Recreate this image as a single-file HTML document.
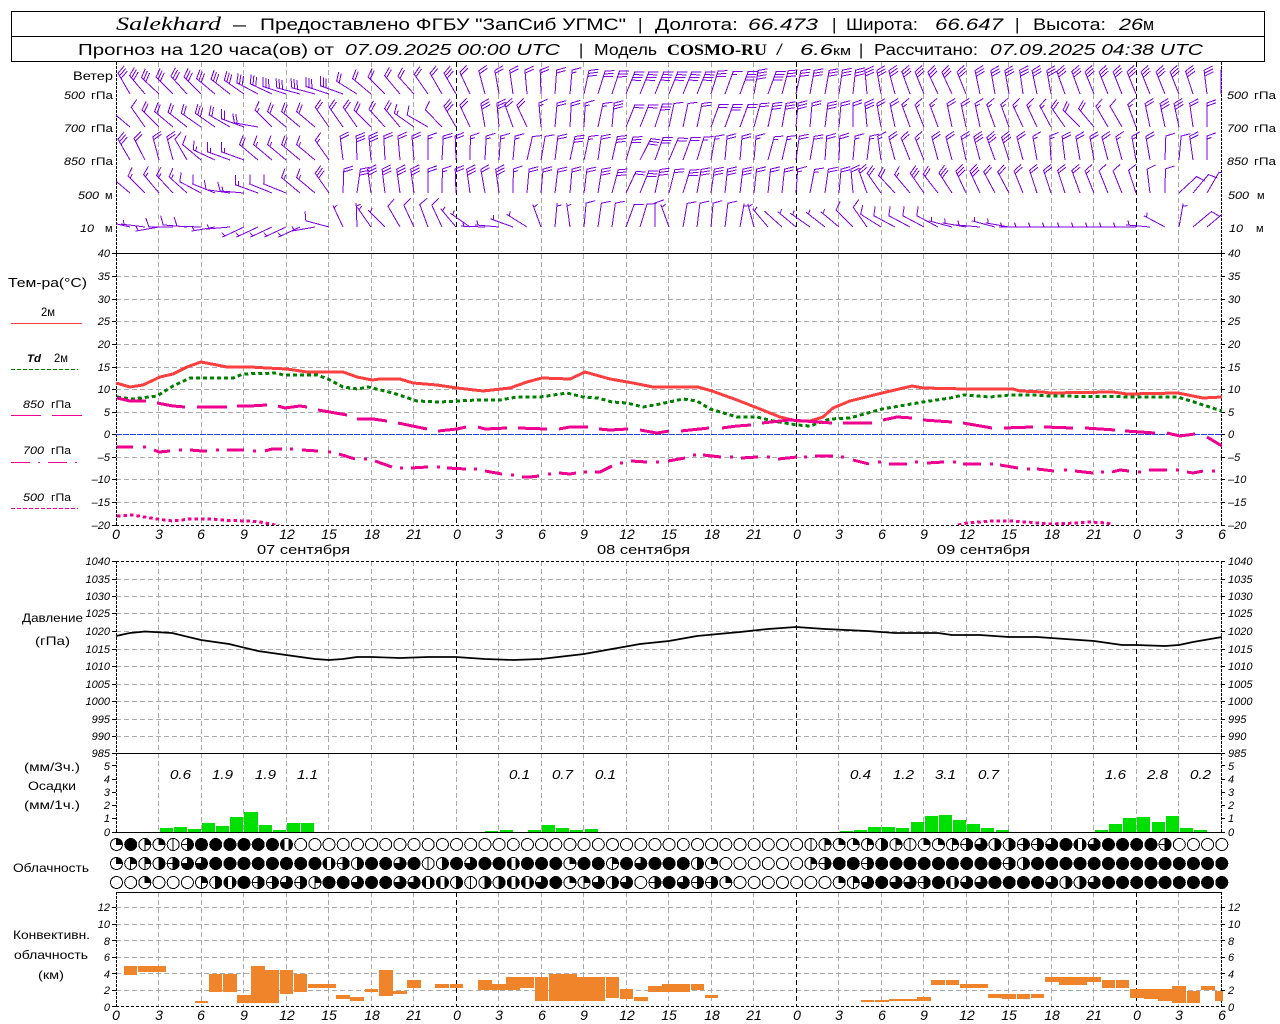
<!DOCTYPE html>
<html lang="ru"><head><meta charset="utf-8"><title>Salekhard</title>
<style>
html,body{margin:0;padding:0;background:#fff}
svg{display:block}
text{font-family:"Liberation Sans",sans-serif;fill:#000}
.i{font-style:italic}
.t{font-size:17px}
.u{font-size:16px}
.l{font-size:12px}
.a{font-size:11px;font-style:italic}
.an{font-size:11px;font-style:italic;text-anchor:end}
.x{font-size:14px;font-style:italic;text-anchor:middle}
.p{font-size:13px;font-style:italic}
.m{text-anchor:middle}
.cr{shape-rendering:crispEdges}
</style></head><body>
<svg width="1280" height="1024" viewBox="0 0 1280 1024" xmlns="http://www.w3.org/2000/svg">
<defs>
<clipPath id="wc"><rect x="116" y="62" width="1106" height="191"/></clipPath>
<clipPath id="tc"><rect x="116" y="253" width="1106" height="272"/></clipPath>
<clipPath id="cc"><rect x="116" y="892" width="1108" height="114"/></clipPath>
<path id="z" d="M0 0V-24"/>
<path id="h" d="M0 0V-24M0-21l4.500-1.500"/>
<path id="a" d="M0 0V-24l9-3.200"/>
<path id="b" d="M0 0V-24l9-3.200M0-21l4.500-1.500"/>
<path id="c" d="M0 0V-24l9-3.200M0-21l9-3.200"/>
<path id="e" d="M0 0V-24l9-3.200M0-21l9-3.200M0-18l9-3.200"/>
<path id="f" d="M0 0V-24l9-3.200M0-21l9-3.200M0-18l9-3.200M0-15l9-3.200"/>
<g id="k0"><circle r="6" fill="#fff" stroke="#000"/></g>
<g id="k1"><circle r="6" fill="#fff" stroke="#000"/><path d="M0-6V6" stroke="#000"/></g>
<g id="k2"><circle r="6" fill="#fff" stroke="#000"/><path d="M0 0V-6A6 6 0 0 1 6 0Z" fill="#000" stroke="#000"/></g>
<g id="k3"><circle r="6" fill="#fff" stroke="#000"/><path d="M0 6V-6A6 6 0 0 1 6 0H0Z" fill="#000" stroke="#000"/></g>
<g id="k4"><circle r="6" fill="#fff" stroke="#000"/><path d="M0-6A6 6 0 0 1 0 6Z" fill="#000" stroke="#000"/></g>
<g id="k5"><circle r="6" fill="#fff" stroke="#000"/><path d="M0-6A6 6 0 0 1 0 6ZM-6 0H0" fill="#000" stroke="#000"/></g>
<g id="k6"><circle r="6" fill="#000" stroke="#000"/><path d="M0 0H-6.500V-6.500H0Z" fill="#fff"/><path d="M-6 0A6 6 0 0 1 0-6" fill="none" stroke="#000"/><path d="M-6 0H0V-6" fill="none" stroke="#000"/></g>
<g id="k7"><circle r="6" fill="#000" stroke="#000"/><rect x="-2" y="-5.500" width="4" height="11" fill="#fff"/></g>
<g id="k8"><circle r="6.500" fill="#000"/></g>
</defs>

<!-- header -->
<rect x="11.500" y="11.500" width="1253" height="25" fill="none" stroke="#000" class="cr"/>
<rect x="11.500" y="36.500" width="1253" height="25" fill="none" stroke="#000" class="cr"/>
<text x="116" y="30" class="t i" style="font-family:'Liberation Serif',serif;font-size:19px" textLength="105" lengthAdjust="spacingAndGlyphs">Salekhard</text>
<text x="233" y="30" class="t" textLength="13" lengthAdjust="spacingAndGlyphs">–</text>
<text x="260" y="30" class="t" textLength="366" lengthAdjust="spacingAndGlyphs">Предоставлено ФГБУ "ЗапСиб УГМС"</text>
<text x="638" y="30" class="t">|</text>
<text x="655" y="30" class="t" textLength="83" lengthAdjust="spacingAndGlyphs">Долгота:</text>
<text x="748" y="30" class="t i" textLength="70" lengthAdjust="spacingAndGlyphs">66.473</text>
<text x="832" y="30" class="t">|</text>
<text x="846" y="30" class="t" textLength="72" lengthAdjust="spacingAndGlyphs">Широта:</text>
<text x="935" y="30" class="t i" textLength="68" lengthAdjust="spacingAndGlyphs">66.647</text>
<text x="1015" y="30" class="t">|</text>
<text x="1033" y="30" class="t" textLength="73" lengthAdjust="spacingAndGlyphs">Высота:</text>
<text x="1119" y="30" class="t i" textLength="24" lengthAdjust="spacingAndGlyphs">26</text>
<text x="1143" y="30" class="t" textLength="11" lengthAdjust="spacingAndGlyphs">м</text>
<text x="78" y="55" class="u" textLength="256" lengthAdjust="spacingAndGlyphs">Прогноз на 120 часа(ов) от</text>
<text x="345" y="55" class="u i" textLength="215" lengthAdjust="spacingAndGlyphs">07.09.2025 00:00 UTC</text>
<text x="579" y="55" class="u">|</text>
<text x="594" y="55" class="u" textLength="63" lengthAdjust="spacingAndGlyphs">Модель</text>
<text x="667" y="55" style="font-family:'Liberation Serif',serif;font-size:16px;font-weight:bold" textLength="100" lengthAdjust="spacingAndGlyphs">COSMO-RU</text>
<text x="777" y="55" class="u i">/</text>
<text x="800" y="55" class="u i" textLength="33" lengthAdjust="spacingAndGlyphs">6.6</text>
<text x="833" y="55" style="font-size:13px" textLength="18" lengthAdjust="spacingAndGlyphs">км</text>
<text x="859" y="55" class="u">|</text>
<text x="874" y="55" class="u" textLength="104" lengthAdjust="spacingAndGlyphs">Рассчитано:</text>
<text x="990" y="55" class="u i" textLength="213" lengthAdjust="spacingAndGlyphs">07.09.2025 04:38 UTC</text>

<!-- grid verticals -->
<g class="cr" fill="none">
<path stroke="#aaa" stroke-dasharray="5 3" d="M158.500 62V525M201.500 62V525M243.500 62V525M286.500 62V525M328.500 62V525M371.500 62V525M413.500 62V525M498.500 62V525M541.500 62V525M583.500 62V525M626.500 62V525M668.500 62V525M711.500 62V525M753.500 62V525M838.500 62V525M881.500 62V525M923.500 62V525M966.500 62V525M1008.500 62V525M1051.500 62V525M1093.500 62V525M1178.500 62V525"/>
<path stroke="#aaa" stroke-dasharray="5 3" d="M158.500 561V832M201.500 561V832M243.500 561V832M286.500 561V832M328.500 561V832M371.500 561V832M413.500 561V832M498.500 561V832M541.500 561V832M583.500 561V832M626.500 561V832M668.500 561V832M711.500 561V832M753.500 561V832M838.500 561V832M881.500 561V832M923.500 561V832M966.500 561V832M1008.500 561V832M1051.500 561V832M1093.500 561V832M1178.500 561V832M456.500 753V832M796.500 753V832M1136.500 753V832"/>
<path stroke="#aaa" stroke-dasharray="5 3" d="M158.500 892V1006M201.500 892V1006M243.500 892V1006M286.500 892V1006M328.500 892V1006M371.500 892V1006M413.500 892V1006M498.500 892V1006M541.500 892V1006M583.500 892V1006M626.500 892V1006M668.500 892V1006M711.500 892V1006M753.500 892V1006M838.500 892V1006M881.500 892V1006M923.500 892V1006M966.500 892V1006M1008.500 892V1006M1051.500 892V1006M1093.500 892V1006M1178.500 892V1006"/>
<path stroke="#aaa" stroke-dasharray="5 3" d="M116 276.500H1221M116 299.500H1221M116 321.500H1221M116 344.500H1221M116 367.500H1221M116 389.500H1221M116 412.500H1221M116 457.500H1221M116 479.500H1221M116 502.500H1221M116 579.500H1221M116 596.500H1221M116 613.500H1221M116 631.500H1221M116 649.500H1221M116 666.500H1221M116 684.500H1221M116 701.500H1221M116 719.500H1221M116 736.500H1221M116 907.500H1221M116 924.500H1221M116 940.500H1221M116 957.500H1221M116 973.500H1221M116 990.500H1221"/>
<path stroke="#000" stroke-dasharray="5 3" d="M456.500 62V525M796.500 62V525M1136.500 62V525M456.500 561V753M796.500 561V753M1136.500 561V753M456.500 892V1006M796.500 892V1006M1136.500 892V1006"/>
<path stroke="#000" stroke-dasharray="3 1" d="M116.500 62V525M1221.500 62V525M116.500 561V832M1221.500 561V832M116.500 892V1006M1221.500 892V1006"/>
<path stroke="#000" stroke-dasharray="3 2" d="M116 525.500H1221M116 561.500H1221M116 1006.500H1221"/>
<path stroke="#2040f0" stroke-dasharray="6 1" d="M116 434.500H1221"/>
<path stroke="#000" d="M112 253.500H1225M112 753.500H1225M116 832.500H1221M116 892.500H1221"/>
<path stroke="#000" d="M112 276.500h4M112 299.500h4M112 321.500h4M112 344.500h4M112 367.500h4M112 389.500h4M112 412.500h4M112 434.500h4M112 457.500h4M112 479.500h4M112 502.500h4M112 525.500h4M112 561.500h4M112 579.500h4M112 596.500h4M112 613.500h4M112 631.500h4M112 649.500h4M112 666.500h4M112 684.500h4M112 701.500h4M112 719.500h4M112 736.500h4M112 765.500h4M112 779.500h4M112 792.500h4M112 805.500h4M112 818.500h4M112 832.500h4M112 907.500h4M112 924.500h4M112 940.500h4M112 957.500h4M112 973.500h4M112 990.500h4M112 1006.500h4M1221 276.500h4M1221 299.500h4M1221 321.500h4M1221 344.500h4M1221 367.500h4M1221 389.500h4M1221 412.500h4M1221 434.500h4M1221 457.500h4M1221 479.500h4M1221 502.500h4M1221 525.500h4M1221 561.500h4M1221 579.500h4M1221 596.500h4M1221 613.500h4M1221 631.500h4M1221 649.500h4M1221 666.500h4M1221 684.500h4M1221 701.500h4M1221 719.500h4M1221 736.500h4M1221 765.500h4M1221 779.500h4M1221 792.500h4M1221 805.500h4M1221 818.500h4M1221 832.500h4M1221 907.500h4M1221 924.500h4M1221 940.500h4M1221 957.500h4M1221 973.500h4M1221 990.500h4M1221 1006.500h4"/>
</g>

<!-- wind barbs -->
<g clip-path="url(#wc)" fill="none" stroke="#7f00e6" class="cr">
<g transform="translate(0,94)">
<use href="#e" transform="translate(130)rotate(-30)"/><use href="#e" transform="translate(145)rotate(-40)"/><use href="#e" transform="translate(159)rotate(-47)"/><use href="#e" transform="translate(173)rotate(-45)"/><use href="#e" transform="translate(187)rotate(-42)"/><use href="#e" transform="translate(201)rotate(-45)"/><use href="#e" transform="translate(215)rotate(-50)"/><use href="#e" transform="translate(230)rotate(-52)"/><use href="#e" transform="translate(244)rotate(-55)"/><use href="#e" transform="translate(258)rotate(-62)"/><use href="#e" transform="translate(272)rotate(-65)"/><use href="#e" transform="translate(286)rotate(-72)"/><use href="#e" transform="translate(300)rotate(-75)"/><use href="#e" transform="translate(315)rotate(-75)"/><use href="#e" transform="translate(329)rotate(-72)"/><use href="#e" transform="translate(343)rotate(-70)"/><use href="#c" transform="translate(357)rotate(-58)"/><use href="#c" transform="translate(371)rotate(-50)"/><use href="#c" transform="translate(385)rotate(-45)"/><use href="#c" transform="translate(400)rotate(-40)"/><use href="#c" transform="translate(414)rotate(-42)"/><use href="#c" transform="translate(428)rotate(-35)"/><use href="#c" transform="translate(442)rotate(-30)"/><use href="#e" transform="translate(456)rotate(-30)"/><use href="#c" transform="translate(470)rotate(-25)"/><use href="#c" transform="translate(485)rotate(-15)"/><use href="#c" transform="translate(499)rotate(-10)"/><use href="#c" transform="translate(513)rotate(-8)"/><use href="#c" transform="translate(527)rotate(-5)"/><use href="#c" transform="translate(541)rotate(-2)"/><use href="#c" transform="translate(555)rotate(4)"/><use href="#b" transform="translate(570)rotate(5)"/><use href="#e" transform="translate(584)rotate(12)"/><use href="#e" transform="translate(598)rotate(17)"/><use href="#e" transform="translate(612)rotate(18)"/><use href="#f" transform="translate(626)rotate(22)"/><use href="#f" transform="translate(640)rotate(22)"/><use href="#f" transform="translate(655)rotate(22)"/><use href="#f" transform="translate(669)rotate(22)"/><use href="#f" transform="translate(683)rotate(22)"/><use href="#f" transform="translate(697)rotate(22)"/><use href="#e" transform="translate(711)rotate(17)"/><use href="#b" transform="translate(725)rotate(20)"/><use href="#f" transform="translate(740)rotate(20)"/><use href="#f" transform="translate(754)rotate(10)"/><use href="#f" transform="translate(768)rotate(20)"/><use href="#e" transform="translate(782)rotate(15)"/><use href="#e" transform="translate(796)rotate(12)"/><use href="#e" transform="translate(810)rotate(10)"/><use href="#e" transform="translate(825)rotate(10)"/><use href="#e" transform="translate(839)rotate(8)"/><use href="#e" transform="translate(853)rotate(6)"/><use href="#e" transform="translate(867)rotate(-5)"/><use href="#e" transform="translate(881)rotate(-10)"/><use href="#e" transform="translate(895)rotate(-15)"/><use href="#e" transform="translate(910)rotate(-20)"/><use href="#e" transform="translate(924)rotate(-22)"/><use href="#e" transform="translate(938)rotate(-25)"/><use href="#e" transform="translate(952)rotate(-25)"/><use href="#e" transform="translate(966)rotate(-22)"/><use href="#e" transform="translate(980)rotate(-12)"/><use href="#e" transform="translate(995)rotate(-10)"/><use href="#e" transform="translate(1009)rotate(-10)"/><use href="#e" transform="translate(1023)rotate(-8)"/><use href="#e" transform="translate(1037)rotate(-12)"/><use href="#e" transform="translate(1051)rotate(-10)"/><use href="#e" transform="translate(1065)rotate(-20)"/><use href="#e" transform="translate(1080)rotate(-20)"/><use href="#e" transform="translate(1094)rotate(-22)"/><use href="#e" transform="translate(1108)rotate(-22)"/><use href="#e" transform="translate(1122)rotate(-22)"/><use href="#e" transform="translate(1136)rotate(-22)"/><use href="#e" transform="translate(1150)rotate(-22)"/><use href="#e" transform="translate(1165)rotate(-22)"/><use href="#e" transform="translate(1179)rotate(-22)"/><use href="#e" transform="translate(1193)rotate(-18)"/><use href="#e" transform="translate(1207)rotate(-7)"/><use href="#e" transform="translate(1221)rotate(0)"/>
</g>
<g transform="translate(0,127)">
<use href="#a" transform="translate(130)rotate(-50)"/><use href="#a" transform="translate(145)rotate(-35)"/><use href="#c" transform="translate(159)rotate(-45)"/><use href="#c" transform="translate(173)rotate(-50)"/><use href="#c" transform="translate(187)rotate(-52)"/><use href="#c" transform="translate(201)rotate(-55)"/><use href="#e" transform="translate(215)rotate(-55)"/><use href="#c" transform="translate(230)rotate(-60)"/><use href="#c" transform="translate(244)rotate(-70)"/><use href="#c" transform="translate(258)rotate(-80)"/><use href="#b" transform="translate(272)rotate(-45)"/><use href="#c" transform="translate(286)rotate(-50)"/><use href="#c" transform="translate(300)rotate(-50)"/><use href="#c" transform="translate(315)rotate(-50)"/><use href="#c" transform="translate(329)rotate(-35)"/><use href="#c" transform="translate(343)rotate(-35)"/><use href="#c" transform="translate(357)rotate(-35)"/><use href="#c" transform="translate(371)rotate(-45)"/><use href="#c" transform="translate(385)rotate(-42)"/><use href="#c" transform="translate(400)rotate(-40)"/><use href="#b" transform="translate(414)rotate(-55)"/><use href="#a" transform="translate(428)rotate(-60)"/><use href="#a" transform="translate(442)rotate(-44)"/><use href="#e" transform="translate(456)rotate(-30)"/><use href="#c" transform="translate(470)rotate(-25)"/><use href="#e" transform="translate(485)rotate(-10)"/><use href="#e" transform="translate(499)rotate(-5)"/><use href="#c" transform="translate(513)rotate(-20)"/><use href="#c" transform="translate(527)rotate(-25)"/><use href="#b" transform="translate(541)rotate(-5)"/><use href="#c" transform="translate(555)rotate(5)"/><use href="#c" transform="translate(570)rotate(3)"/><use href="#b" transform="translate(584)rotate(3)"/><use href="#b" transform="translate(598)rotate(12)"/><use href="#e" transform="translate(612)rotate(5)"/><use href="#c" transform="translate(626)rotate(22)"/><use href="#c" transform="translate(640)rotate(22)"/><use href="#e" transform="translate(655)rotate(18)"/><use href="#a" transform="translate(669)rotate(12)"/><use href="#a" transform="translate(683)rotate(12)"/><use href="#c" transform="translate(697)rotate(12)"/><use href="#c" transform="translate(711)rotate(20)"/><use href="#e" transform="translate(725)rotate(20)"/><use href="#c" transform="translate(740)rotate(20)"/><use href="#c" transform="translate(754)rotate(15)"/><use href="#e" transform="translate(768)rotate(12)"/><use href="#e" transform="translate(782)rotate(10)"/><use href="#e" transform="translate(796)rotate(5)"/><use href="#c" transform="translate(810)rotate(5)"/><use href="#e" transform="translate(825)rotate(7)"/><use href="#c" transform="translate(839)rotate(5)"/><use href="#c" transform="translate(853)rotate(0)"/><use href="#e" transform="translate(867)rotate(-5)"/><use href="#c" transform="translate(881)rotate(-10)"/><use href="#c" transform="translate(895)rotate(-12)"/><use href="#b" transform="translate(910)rotate(-20)"/><use href="#b" transform="translate(924)rotate(-22)"/><use href="#b" transform="translate(938)rotate(-20)"/><use href="#c" transform="translate(952)rotate(-12)"/><use href="#c" transform="translate(966)rotate(-12)"/><use href="#b" transform="translate(980)rotate(-12)"/><use href="#b" transform="translate(995)rotate(-20)"/><use href="#b" transform="translate(1009)rotate(-20)"/><use href="#b" transform="translate(1023)rotate(-25)"/><use href="#b" transform="translate(1037)rotate(-25)"/><use href="#b" transform="translate(1051)rotate(-28)"/><use href="#c" transform="translate(1065)rotate(-35)"/><use href="#c" transform="translate(1080)rotate(-45)"/><use href="#c" transform="translate(1094)rotate(-40)"/><use href="#b" transform="translate(1108)rotate(-30)"/><use href="#a" transform="translate(1122)rotate(-30)"/><use href="#b" transform="translate(1136)rotate(-20)"/><use href="#c" transform="translate(1150)rotate(-12)"/><use href="#e" transform="translate(1165)rotate(-12)"/><use href="#e" transform="translate(1179)rotate(-12)"/><use href="#c" transform="translate(1193)rotate(-8)"/><use href="#c" transform="translate(1207)rotate(0)"/>
</g>
<g transform="translate(0,160)">
<use href="#e" transform="translate(130)rotate(-30)"/><use href="#c" transform="translate(145)rotate(-27)"/><use href="#c" transform="translate(159)rotate(-15)"/><use href="#c" transform="translate(173)rotate(-15)"/><use href="#a" transform="translate(187)rotate(-30)"/><use href="#a" transform="translate(201)rotate(-50)"/><use href="#b" transform="translate(215)rotate(-65)"/><use href="#b" transform="translate(230)rotate(-70)"/><use href="#b" transform="translate(244)rotate(-70)"/><use href="#c" transform="translate(258)rotate(-50)"/><use href="#b" transform="translate(272)rotate(-50)"/><use href="#b" transform="translate(286)rotate(-50)"/><use href="#c" transform="translate(300)rotate(-50)"/><use href="#b" transform="translate(315)rotate(-50)"/><use href="#b" transform="translate(329)rotate(-35)"/><use href="#c" transform="translate(343)rotate(-7)"/><use href="#e" transform="translate(357)rotate(-2)"/><use href="#e" transform="translate(371)rotate(-5)"/><use href="#c" transform="translate(385)rotate(-3)"/><use href="#c" transform="translate(400)rotate(-5)"/><use href="#c" transform="translate(414)rotate(-5)"/><use href="#b" transform="translate(428)rotate(0)"/><use href="#c" transform="translate(442)rotate(3)"/><use href="#c" transform="translate(456)rotate(-2)"/><use href="#b" transform="translate(470)rotate(1)"/><use href="#b" transform="translate(485)rotate(3)"/><use href="#b" transform="translate(499)rotate(4)"/><use href="#b" transform="translate(513)rotate(5)"/><use href="#a" transform="translate(527)rotate(13)"/><use href="#a" transform="translate(541)rotate(10)"/><use href="#c" transform="translate(555)rotate(7)"/><use href="#e" transform="translate(570)rotate(12)"/><use href="#b" transform="translate(584)rotate(12)"/><use href="#c" transform="translate(598)rotate(8)"/><use href="#e" transform="translate(612)rotate(13)"/><use href="#e" transform="translate(626)rotate(17)"/><use href="#e" transform="translate(640)rotate(27)"/><use href="#e" transform="translate(655)rotate(20)"/><use href="#c" transform="translate(669)rotate(23)"/><use href="#c" transform="translate(683)rotate(20)"/><use href="#b" transform="translate(697)rotate(17)"/><use href="#b" transform="translate(711)rotate(10)"/><use href="#c" transform="translate(725)rotate(5)"/><use href="#c" transform="translate(740)rotate(5)"/><use href="#b" transform="translate(754)rotate(5)"/><use href="#b" transform="translate(768)rotate(15)"/><use href="#b" transform="translate(782)rotate(13)"/><use href="#c" transform="translate(796)rotate(8)"/><use href="#c" transform="translate(810)rotate(10)"/><use href="#c" transform="translate(825)rotate(4)"/><use href="#c" transform="translate(839)rotate(2)"/><use href="#b" transform="translate(853)rotate(5)"/><use href="#b" transform="translate(867)rotate(7)"/><use href="#b" transform="translate(881)rotate(-8)"/><use href="#c" transform="translate(895)rotate(-15)"/><use href="#c" transform="translate(910)rotate(-22)"/><use href="#b" transform="translate(924)rotate(-22)"/><use href="#c" transform="translate(938)rotate(-15)"/><use href="#c" transform="translate(952)rotate(-15)"/><use href="#c" transform="translate(966)rotate(-12)"/><use href="#e" transform="translate(980)rotate(-15)"/><use href="#e" transform="translate(995)rotate(-20)"/><use href="#e" transform="translate(1009)rotate(-18)"/><use href="#c" transform="translate(1023)rotate(-15)"/><use href="#b" transform="translate(1037)rotate(-10)"/><use href="#b" transform="translate(1051)rotate(-3)"/><use href="#c" transform="translate(1065)rotate(-7)"/><use href="#c" transform="translate(1080)rotate(-10)"/><use href="#c" transform="translate(1094)rotate(-10)"/><use href="#c" transform="translate(1108)rotate(-15)"/><use href="#b" transform="translate(1122)rotate(-15)"/><use href="#b" transform="translate(1136)rotate(-10)"/><use href="#c" transform="translate(1150)rotate(-10)"/><use href="#a" transform="translate(1165)rotate(2)"/><use href="#a" transform="translate(1179)rotate(5)"/><use href="#c" transform="translate(1193)rotate(-8)"/><use href="#b" transform="translate(1207)rotate(0)"/>
</g>
<g transform="translate(0,193)">
<use href="#a" transform="translate(130)rotate(-50)"/><use href="#b" transform="translate(145)rotate(-45)"/><use href="#b" transform="translate(159)rotate(-40)"/><use href="#b" transform="translate(173)rotate(-43)"/><use href="#b" transform="translate(187)rotate(-48)"/><use href="#a" transform="translate(201)rotate(-62)"/><use href="#a" transform="translate(215)rotate(-68)"/><use href="#a" transform="translate(230)rotate(-82)"/><use href="#b" transform="translate(244)rotate(-85)"/><use href="#b" transform="translate(258)rotate(-70)"/><use href="#a" transform="translate(272)rotate(-68)"/><use href="#a" transform="translate(286)rotate(-68)"/><use href="#b" transform="translate(300)rotate(-50)"/><use href="#b" transform="translate(315)rotate(-50)"/><use href="#e" transform="translate(329)rotate(-35)"/><use href="#c" transform="translate(343)rotate(2)"/><use href="#e" transform="translate(357)rotate(8)"/><use href="#e" transform="translate(371)rotate(-8)"/><use href="#e" transform="translate(385)rotate(-7)"/><use href="#e" transform="translate(400)rotate(-8)"/><use href="#e" transform="translate(414)rotate(-8)"/><use href="#c" transform="translate(428)rotate(0)"/><use href="#b" transform="translate(442)rotate(1)"/><use href="#c" transform="translate(456)rotate(-2)"/><use href="#e" transform="translate(470)rotate(-8)"/><use href="#c" transform="translate(485)rotate(-10)"/><use href="#e" transform="translate(499)rotate(-8)"/><use href="#b" transform="translate(513)rotate(1)"/><use href="#c" transform="translate(527)rotate(5)"/><use href="#c" transform="translate(541)rotate(5)"/><use href="#c" transform="translate(555)rotate(7)"/><use href="#c" transform="translate(570)rotate(5)"/><use href="#c" transform="translate(584)rotate(7)"/><use href="#e" transform="translate(598)rotate(9)"/><use href="#e" transform="translate(612)rotate(15)"/><use href="#c" transform="translate(626)rotate(25)"/><use href="#e" transform="translate(640)rotate(22)"/><use href="#e" transform="translate(655)rotate(12)"/><use href="#c" transform="translate(669)rotate(14)"/><use href="#e" transform="translate(683)rotate(17)"/><use href="#e" transform="translate(697)rotate(10)"/><use href="#e" transform="translate(711)rotate(8)"/><use href="#e" transform="translate(725)rotate(6)"/><use href="#e" transform="translate(740)rotate(7)"/><use href="#c" transform="translate(754)rotate(6)"/><use href="#c" transform="translate(768)rotate(6)"/><use href="#c" transform="translate(782)rotate(6)"/><use href="#b" transform="translate(796)rotate(4)"/><use href="#b" transform="translate(810)rotate(11)"/><use href="#c" transform="translate(825)rotate(8)"/><use href="#c" transform="translate(839)rotate(5)"/><use href="#c" transform="translate(853)rotate(-5)"/><use href="#c" transform="translate(867)rotate(-20)"/><use href="#c" transform="translate(881)rotate(-35)"/><use href="#c" transform="translate(895)rotate(-43)"/><use href="#b" transform="translate(910)rotate(-40)"/><use href="#e" transform="translate(924)rotate(-35)"/><use href="#c" transform="translate(938)rotate(-38)"/><use href="#e" transform="translate(952)rotate(-33)"/><use href="#e" transform="translate(966)rotate(-25)"/><use href="#e" transform="translate(980)rotate(-25)"/><use href="#c" transform="translate(995)rotate(-28)"/><use href="#c" transform="translate(1009)rotate(-28)"/><use href="#c" transform="translate(1023)rotate(-22)"/><use href="#c" transform="translate(1037)rotate(-18)"/><use href="#c" transform="translate(1051)rotate(-18)"/><use href="#c" transform="translate(1065)rotate(-18)"/><use href="#c" transform="translate(1080)rotate(-20)"/><use href="#b" transform="translate(1094)rotate(-22)"/><use href="#a" transform="translate(1108)rotate(-22)"/><use href="#a" transform="translate(1122)rotate(-22)"/><use href="#a" transform="translate(1136)rotate(-18)"/><use href="#a" transform="translate(1150)rotate(-7)"/><use href="#a" transform="translate(1165)rotate(1)"/><use href="#a" transform="translate(1179)rotate(47)"/><use href="#a" transform="translate(1193)rotate(40)"/><use href="#a" transform="translate(1207)rotate(30)"/>
</g>
<g transform="translate(0,227)">
<use href="#h" transform="translate(130)rotate(-77)"/><use href="#h" transform="translate(145)rotate(-83)"/><use href="#h" transform="translate(159)rotate(-100)"/><use href="#a" transform="translate(173)rotate(-90)"/><use href="#a" transform="translate(187)rotate(-85)"/><use href="#a" transform="translate(201)rotate(-88)"/><use href="#h" transform="translate(215)rotate(-100)"/><use href="#h" transform="translate(230)rotate(-95)"/><use href="#h" transform="translate(244)rotate(-115)"/><use href="#h" transform="translate(258)rotate(-115)"/><use href="#h" transform="translate(272)rotate(-115)"/><use href="#h" transform="translate(286)rotate(-115)"/><use href="#h" transform="translate(300)rotate(-115)"/><use href="#h" transform="translate(315)rotate(-100)"/><use href="#a" transform="translate(329)rotate(-75)"/><use href="#h" transform="translate(343)rotate(-25)"/><use href="#h" transform="translate(357)rotate(-2)"/><use href="#h" transform="translate(371)rotate(-35)"/><use href="#h" transform="translate(385)rotate(-45)"/><use href="#a" transform="translate(400)rotate(-30)"/><use href="#a" transform="translate(414)rotate(-25)"/><use href="#a" transform="translate(428)rotate(-20)"/><use href="#a" transform="translate(442)rotate(-25)"/><use href="#h" transform="translate(456)rotate(-40)"/><use href="#h" transform="translate(470)rotate(-55)"/><use href="#h" transform="translate(485)rotate(-88)"/><use href="#h" transform="translate(499)rotate(-85)"/><use href="#h" transform="translate(513)rotate(-70)"/><use href="#h" transform="translate(527)rotate(-58)"/><use href="#h" transform="translate(541)rotate(-20)"/><use href="#h" transform="translate(555)rotate(5)"/><use href="#h" transform="translate(570)rotate(-8)"/><use href="#a" transform="translate(584)rotate(5)"/><use href="#a" transform="translate(598)rotate(8)"/><use href="#a" transform="translate(612)rotate(8)"/><use href="#a" transform="translate(626)rotate(20)"/><use href="#a" transform="translate(640)rotate(17)"/><use href="#a" transform="translate(655)rotate(0)"/><use href="#h" transform="translate(669)rotate(-20)"/><use href="#a" transform="translate(683)rotate(10)"/><use href="#a" transform="translate(697)rotate(7)"/><use href="#a" transform="translate(711)rotate(5)"/><use href="#a" transform="translate(725)rotate(7)"/><use href="#h" transform="translate(740)rotate(10)"/><use href="#h" transform="translate(754)rotate(-15)"/><use href="#h" transform="translate(768)rotate(-40)"/><use href="#z" transform="translate(782)rotate(-48)"/><use href="#h" transform="translate(796)rotate(-50)"/><use href="#h" transform="translate(810)rotate(-55)"/><use href="#h" transform="translate(825)rotate(-52)"/><use href="#h" transform="translate(839)rotate(-50)"/><use href="#a" transform="translate(853)rotate(-45)"/><use href="#a" transform="translate(867)rotate(-35)"/><use href="#a" transform="translate(881)rotate(-58)"/><use href="#a" transform="translate(895)rotate(-62)"/><use href="#a" transform="translate(910)rotate(-62)"/><use href="#a" transform="translate(924)rotate(-62)"/><use href="#a" transform="translate(938)rotate(-62)"/><use href="#h" transform="translate(952)rotate(-75)"/><use href="#h" transform="translate(966)rotate(-80)"/><use href="#h" transform="translate(980)rotate(-85)"/><use href="#h" transform="translate(995)rotate(-75)"/><use href="#h" transform="translate(1009)rotate(-80)"/><use href="#h" transform="translate(1023)rotate(-90)"/><use href="#h" transform="translate(1037)rotate(-90)"/><use href="#h" transform="translate(1051)rotate(-90)"/><use href="#h" transform="translate(1065)rotate(-90)"/><use href="#h" transform="translate(1080)rotate(-90)"/><use href="#h" transform="translate(1094)rotate(-90)"/><use href="#h" transform="translate(1108)rotate(-90)"/><use href="#h" transform="translate(1122)rotate(-90)"/><use href="#h" transform="translate(1136)rotate(-90)"/><use href="#h" transform="translate(1150)rotate(-85)"/><use href="#h" transform="translate(1165)rotate(-62)"/><use href="#h" transform="translate(1179)rotate(10)"/><use href="#a" transform="translate(1193)rotate(50)"/><use href="#a" transform="translate(1207)rotate(50)"/>
</g>
</g>

<!-- temperature curves -->
<g clip-path="url(#tc)" fill="none" stroke-width="3" stroke-linejoin="round" class="cr">
<polyline stroke="#ff4040" points="116,383 130,387 143,385 160,377 173,374 187,367 201,362 217,365 227,367 250,367 267,368 287,369 307,372 343,372 357,377 372,380 380,379 400,379 413,383 437,385 457,388 483,391 510,388 527,382 542,378 570,379 585,372 610,379 633,383 653,387 698,387 712,391 737,400 760,409 780,417 797,421 810,421 823,417 833,408 850,401 882,393 912,386 923,388 967,389 1013,389 1020,391 1043,392 1050,393 1113,392 1127,394 1178,393 1203,398 1222,397"/>
<polyline stroke="#008000" stroke-dasharray="4 3" points="117,397 132,399 157,396 173,386 190,378 233,378 243,374 277,373 283,375 317,375 328,379 343,387 358,389 368,387 393,393 417,401 440,402 457,401 477,400 500,400 517,397 540,397 567,393 583,397 598,398 612,402 627,403 643,407 660,404 683,399 697,401 710,409 737,417 757,417 773,421 797,425 810,426 830,419 850,418 882,409 923,402 950,398 963,395 990,397 1010,395 1037,395 1047,396 1147,397 1178,397 1197,403 1222,411"/>
<g stroke="#f00090">
<polyline points="117,398 130,401 146,401"/><polyline points="157,403 173,406 185,407"/><polyline points="197,407 227,407"/><polyline points="237,406 250,406 267,405"/><polyline points="278,406 285,408 300,406 307,407"/><polyline points="318,410 347,415"/><polyline points="357,419 373,419 387,421"/><polyline points="398,423 427,429"/><polyline points="438,431 457,429 466,427"/><polyline points="478,427 485,429 507,428"/><polyline points="518,428 547,429"/><polyline points="559,429 570,427 588,427"/><polyline points="599,429 610,430 628,429"/><polyline points="640,430 657,433 669,431"/><polyline points="681,431 709,428"/><polyline points="722,428 737,426 751,425"/><polyline points="762,423 780,421 790,420 832,423"/><polyline points="843,423 872,423"/><polyline points="883,420 897,417 912,418"/><polyline points="923,420 952,422"/><polyline points="963,423 992,428"/><polyline points="1004,428 1033,427"/><polyline points="1044,427 1073,428"/><polyline points="1085,428 1115,430"/><polyline points="1125,431 1155,433"/><polyline points="1167,433 1180,436 1195,434"/><polyline points="1207,437 1222,446"/>
<polyline points="117,447 133,447"/><path d="M143 447h3M179 450h3M216 450h3M253 451h3M290 449h3M328 452h3M364 459h3M400 468h3M437 467h3M474 469h3M511 475h3M548 474h3M584 472h3M620 463h3M656 462h3M693 455h3M730 457h3M767 457h3M804 457h3M841 457h3M878 462h3M915 462h3M953 462h3M990 464h3M1027 469h3M1064 470h3M1101 472h3M1138 472h3M1176 470h3M1212 471h3"/>
<polyline points="154,450 159,452 170,451"/><polyline points="190,450 202,451 207,451"/><polyline points="227,450 244,450"/><polyline points="265,451 272,449 282,449"/><polyline points="302,450 318,451"/><polyline points="339,454 355,459"/><polyline points="375,461 392,467"/><polyline points="411,468 428,467"/><polyline points="447,468 466,469"/><polyline points="485,471 502,474"/><polyline points="522,477 530,477 539,476"/><polyline points="559,473 570,474 576,473"/><polyline points="595,472 600,472 612,466"/><polyline points="631,461 647,462"/><polyline points="668,461 685,458"/><polyline points="703,455 721,457"/><polyline points="741,458 758,457"/><polyline points="778,459 797,457"/><polyline points="815,456 833,456"/><polyline points="853,460 869,464"/><polyline points="889,464 907,464"/><polyline points="927,463 944,462"/><polyline points="963,464 981,464"/><polyline points="1000,465 1018,468"/><polyline points="1037,469 1054,471"/><polyline points="1075,471 1093,473"/><polyline points="1112,472 1120,470 1129,471"/><polyline points="1149,470 1167,470"/><polyline points="1187,472 1193,473 1203,471"/>
<polyline stroke-dasharray="3.500 3" points="117,516 132,515 157,519 173,521 190,519 213,519 220,520 247,521 260,522 280,526"/>
<polyline stroke-dasharray="3.500 3" points="958,525 967,523 993,521 1010,521 1027,522 1050,524 1077,523 1090,522 1107,523 1113,525"/>
</g>
</g>

<!-- pressure -->
<polyline fill="none" stroke="#000" stroke-width="1.700" points="116,636 130,633 145,631.500 172,633 201,640 229,644 258,651 286,655 315,659 329,660 343,659 357,657 372,657 400,658 428,657 456,657 485,659 513,660 541,659 584,654 612,649 640,644 669,641 697,636 740,632 768,629 796,627 825,629 867,631 895,633 938,633 952,635 980,635 1009,637 1037,637 1065,639 1094,641 1122,645 1136,645 1165,646 1179,645 1193,642 1222,637"/>

<!-- precip -->
<path fill="#00e000" class="cr" d="M160 828h13v4h-13zM174 827h13v5h-13zM188 829h13v3h-13zM202 823h13v9h-13zM216 826h13v6h-13zM230 817h13v15h-13zM244 812h14v20h-14zM259 825h13v7h-13zM273 830h13v2h-13zM287 823h13v9h-13zM301 823h13v9h-13zM485 831h13v1h-13zM500 830h13v2h-13zM528 830h13v2h-13zM542 825h13v7h-13zM556 828h13v4h-13zM570 830h13v2h-13zM585 829h13v3h-13zM840 831h13v1h-13zM854 830h13v2h-13zM868 827h13v5h-13zM882 827h13v5h-13zM896 828h13v4h-13zM911 822h13v10h-13zM925 816h13v16h-13zM939 815h13v17h-13zM953 820h13v12h-13zM967 824h13v8h-13zM981 828h13v4h-13zM996 830h13v2h-13zM1095 830h13v2h-13zM1109 824h13v8h-13zM1123 818h13v14h-13zM1137 817h13v15h-13zM1152 822h13v10h-13zM1166 816h13v16h-13zM1180 828h13v4h-13zM1194 830h13v2h-13z"/>

<!-- clouds -->
<g class="cr">
<g transform="translate(0,844.500)">
<use href="#k2" x="116.500"/><use href="#k8" x="130.700"/><use href="#k3" x="144.800"/><use href="#k2" x="159"/><use href="#k1" x="173.200"/><use href="#k5" x="187.400"/><use href="#k8" x="201.500"/><use href="#k8" x="215.700"/><use href="#k8" x="229.900"/><use href="#k8" x="244"/><use href="#k8" x="258.200"/><use href="#k8" x="272.400"/><use href="#k7" x="286.500"/><use href="#k0" x="300.700"/><use href="#k0" x="314.900"/><use href="#k0" x="329"/><use href="#k0" x="343.200"/><use href="#k0" x="357.400"/><use href="#k0" x="371.600"/><use href="#k0" x="385.700"/><use href="#k0" x="399.900"/><use href="#k0" x="414.100"/><use href="#k0" x="428.200"/><use href="#k0" x="442.400"/><use href="#k0" x="456.600"/><use href="#k0" x="470.700"/><use href="#k0" x="484.900"/><use href="#k0" x="499.100"/><use href="#k0" x="513.300"/><use href="#k0" x="527.400"/><use href="#k0" x="541.600"/><use href="#k0" x="555.800"/><use href="#k0" x="569.900"/><use href="#k0" x="584.100"/><use href="#k0" x="598.300"/><use href="#k0" x="612.500"/><use href="#k0" x="626.600"/><use href="#k0" x="640.800"/><use href="#k0" x="655"/><use href="#k0" x="669.100"/><use href="#k0" x="683.300"/><use href="#k0" x="697.500"/><use href="#k0" x="711.600"/><use href="#k0" x="725.800"/><use href="#k0" x="740"/><use href="#k0" x="754.200"/><use href="#k0" x="768.300"/><use href="#k0" x="782.500"/><use href="#k0" x="796.700"/><use href="#k1" x="810.800"/><use href="#k3" x="825"/><use href="#k2" x="839.200"/><use href="#k2" x="853.300"/><use href="#k3" x="867.500"/><use href="#k4" x="881.700"/><use href="#k3" x="895.900"/><use href="#k1" x="910"/><use href="#k2" x="924.200"/><use href="#k2" x="938.400"/><use href="#k3" x="952.500"/><use href="#k5" x="966.700"/><use href="#k6" x="980.900"/><use href="#k4" x="995"/><use href="#k4" x="1009.200"/><use href="#k5" x="1023.400"/><use href="#k5" x="1037.600"/><use href="#k6" x="1051.700"/><use href="#k8" x="1065.900"/><use href="#k7" x="1080.100"/><use href="#k6" x="1094.200"/><use href="#k8" x="1108.400"/><use href="#k8" x="1122.600"/><use href="#k8" x="1136.700"/><use href="#k8" x="1150.900"/><use href="#k5" x="1165.100"/><use href="#k0" x="1179.300"/><use href="#k0" x="1193.400"/><use href="#k0" x="1207.600"/><use href="#k0" x="1221.800"/>
</g>
<g transform="translate(0,863.500)">
<use href="#k2" x="116.500"/><use href="#k3" x="130.700"/><use href="#k3" x="144.800"/><use href="#k4" x="159"/><use href="#k5" x="173.200"/><use href="#k6" x="187.400"/><use href="#k6" x="201.500"/><use href="#k8" x="215.700"/><use href="#k8" x="229.900"/><use href="#k8" x="244"/><use href="#k8" x="258.200"/><use href="#k8" x="272.400"/><use href="#k8" x="286.500"/><use href="#k8" x="300.700"/><use href="#k8" x="314.900"/><use href="#k7" x="329"/><use href="#k5" x="343.200"/><use href="#k4" x="357.400"/><use href="#k8" x="371.600"/><use href="#k8" x="385.700"/><use href="#k6" x="399.900"/><use href="#k8" x="414.100"/><use href="#k1" x="428.200"/><use href="#k4" x="442.400"/><use href="#k8" x="456.600"/><use href="#k6" x="470.700"/><use href="#k8" x="484.900"/><use href="#k8" x="499.100"/><use href="#k7" x="513.300"/><use href="#k8" x="527.400"/><use href="#k8" x="541.600"/><use href="#k8" x="555.800"/><use href="#k2" x="569.900"/><use href="#k8" x="584.100"/><use href="#k8" x="598.300"/><use href="#k3" x="612.500"/><use href="#k8" x="626.600"/><use href="#k6" x="640.800"/><use href="#k8" x="655"/><use href="#k8" x="669.100"/><use href="#k8" x="683.300"/><use href="#k4" x="697.500"/><use href="#k2" x="711.600"/><use href="#k0" x="725.800"/><use href="#k0" x="740"/><use href="#k0" x="754.200"/><use href="#k0" x="768.300"/><use href="#k0" x="782.500"/><use href="#k0" x="796.700"/><use href="#k3" x="810.800"/><use href="#k5" x="825"/><use href="#k8" x="839.200"/><use href="#k8" x="853.300"/><use href="#k5" x="867.500"/><use href="#k8" x="881.700"/><use href="#k8" x="895.900"/><use href="#k8" x="910"/><use href="#k8" x="924.200"/><use href="#k8" x="938.400"/><use href="#k8" x="952.500"/><use href="#k8" x="966.700"/><use href="#k8" x="980.900"/><use href="#k8" x="995"/><use href="#k5" x="1009.200"/><use href="#k4" x="1023.400"/><use href="#k8" x="1037.600"/><use href="#k8" x="1051.700"/><use href="#k8" x="1065.900"/><use href="#k8" x="1080.100"/><use href="#k8" x="1094.200"/><use href="#k8" x="1108.400"/><use href="#k8" x="1122.600"/><use href="#k8" x="1136.700"/><use href="#k8" x="1150.900"/><use href="#k8" x="1165.100"/><use href="#k8" x="1179.300"/><use href="#k8" x="1193.400"/><use href="#k8" x="1207.600"/><use href="#k8" x="1221.800"/>
</g>
<g transform="translate(0,882.500)">
<use href="#k0" x="116.500"/><use href="#k0" x="130.700"/><use href="#k2" x="144.800"/><use href="#k0" x="159"/><use href="#k0" x="173.200"/><use href="#k0" x="187.400"/><use href="#k3" x="201.500"/><use href="#k4" x="215.700"/><use href="#k7" x="229.900"/><use href="#k8" x="244"/><use href="#k5" x="258.200"/><use href="#k5" x="272.400"/><use href="#k6" x="286.500"/><use href="#k5" x="300.700"/><use href="#k3" x="314.900"/><use href="#k8" x="329"/><use href="#k8" x="343.200"/><use href="#k6" x="357.400"/><use href="#k8" x="371.600"/><use href="#k8" x="385.700"/><use href="#k6" x="399.900"/><use href="#k6" x="414.100"/><use href="#k7" x="428.200"/><use href="#k7" x="442.400"/><use href="#k4" x="456.600"/><use href="#k1" x="470.700"/><use href="#k4" x="484.900"/><use href="#k4" x="499.100"/><use href="#k7" x="513.300"/><use href="#k7" x="527.400"/><use href="#k6" x="541.600"/><use href="#k8" x="555.800"/><use href="#k2" x="569.900"/><use href="#k3" x="584.100"/><use href="#k6" x="598.300"/><use href="#k4" x="612.500"/><use href="#k6" x="626.600"/><use href="#k0" x="640.800"/><use href="#k5" x="655"/><use href="#k8" x="669.100"/><use href="#k6" x="683.300"/><use href="#k5" x="697.500"/><use href="#k5" x="711.600"/><use href="#k2" x="725.800"/><use href="#k0" x="740"/><use href="#k0" x="754.200"/><use href="#k0" x="768.300"/><use href="#k0" x="782.500"/><use href="#k0" x="796.700"/><use href="#k0" x="810.800"/><use href="#k0" x="825"/><use href="#k2" x="839.200"/><use href="#k3" x="853.300"/><use href="#k6" x="867.500"/><use href="#k8" x="881.700"/><use href="#k6" x="895.900"/><use href="#k6" x="910"/><use href="#k5" x="924.200"/><use href="#k8" x="938.400"/><use href="#k7" x="952.500"/><use href="#k6" x="966.700"/><use href="#k6" x="980.900"/><use href="#k8" x="995"/><use href="#k8" x="1009.200"/><use href="#k8" x="1023.400"/><use href="#k8" x="1037.600"/><use href="#k6" x="1051.700"/><use href="#k4" x="1065.900"/><use href="#k4" x="1080.100"/><use href="#k6" x="1094.200"/><use href="#k8" x="1108.400"/><use href="#k8" x="1122.600"/><use href="#k8" x="1136.700"/><use href="#k8" x="1150.900"/><use href="#k8" x="1165.100"/><use href="#k8" x="1179.300"/><use href="#k8" x="1193.400"/><use href="#k8" x="1207.600"/><use href="#k8" x="1221.800"/>
</g>
</g>

<!-- convective bars -->
<path fill="#f0842a" class="cr" d="M124 966h13v9h-13zM138 966h28v6h-28zM195 1001h13v2h-13zM209 974h13v18h-13zM223 974h14v18h-14zM237 995h14v8h-14zM251 966h14v37h-14zM265 970h14v33h-14zM280 970h13v24h-13zM294 974h13v18h-13zM308 984h28v4h-28zM336 995h14v4h-14zM350 997h14v4h-14zM365 989h13v3h-13zM379 970h14v26h-14zM393 991h14v3h-14zM407 980h13v8h-13zM420 980h1v8h-1zM435 984h14v4h-14zM450 984h13v4h-13zM478 980h14v10h-14zM492 984h14v6h-14zM506 977h14v13h-14zM520 977h14v11h-14zM535 977h13v24h-13zM549 974h28v27h-28zM577 977h28v24h-28zM606 977h13v21h-13zM620 989h13v10h-13zM634 997h14v4h-14zM648 986h14v6h-14zM662 984h28v8h-28zM691 984h13v6h-13zM705 995h13v3h-13zM861 1000h13v2h-13zM875 1000h14v2h-14zM889 999h28v2h-28zM917 997h14v4h-14zM931 980h14v5h-14zM946 980h13v5h-13zM960 984h28v4h-28zM988 994h14v4h-14zM1002 994h14v5h-14zM1017 994h13v5h-13zM1031 994h13v4h-13zM1045 977h14v5h-14zM1059 977h28v8h-28zM1087 977h14v5h-14zM1102 980h13v8h-13zM1116 980h13v8h-13zM1130 989h14v9h-14zM1144 989h14v10h-14zM1158 989h14v12h-14zM1172 986h14v17h-14zM1187 991h13v12h-13zM1201 986h14v4h-14zM1215 991h8v10h-8z"/>

<!-- wind labels -->
<text x="73" y="80" class="l" textLength="40" lengthAdjust="spacingAndGlyphs">Ветер</text>
<text x="64" y="99" class="a" textLength="21" lengthAdjust="spacingAndGlyphs">500</text><text x="91" y="99" class="a" style="font-style:normal" textLength="22" lengthAdjust="spacingAndGlyphs">гПа</text>
<text x="64" y="132" class="a" textLength="21" lengthAdjust="spacingAndGlyphs">700</text><text x="91" y="132" class="a" style="font-style:normal" textLength="22" lengthAdjust="spacingAndGlyphs">гПа</text>
<text x="64" y="165" class="a" textLength="21" lengthAdjust="spacingAndGlyphs">850</text><text x="91" y="165" class="a" style="font-style:normal" textLength="22" lengthAdjust="spacingAndGlyphs">гПа</text>
<text x="78" y="199" class="a" textLength="21" lengthAdjust="spacingAndGlyphs">500</text><text x="105" y="199" class="a" style="font-style:normal">м</text>
<text x="80" y="232" class="a" textLength="14" lengthAdjust="spacingAndGlyphs">10</text><text x="105" y="232" class="a" style="font-style:normal">м</text>
<text x="1227" y="99" class="a" textLength="21" lengthAdjust="spacingAndGlyphs">500</text><text x="1254" y="99" class="a" style="font-style:normal" textLength="22" lengthAdjust="spacingAndGlyphs">гПа</text>
<text x="1227" y="132" class="a" textLength="21" lengthAdjust="spacingAndGlyphs">700</text><text x="1254" y="132" class="a" style="font-style:normal" textLength="22" lengthAdjust="spacingAndGlyphs">гПа</text>
<text x="1227" y="165" class="a" textLength="21" lengthAdjust="spacingAndGlyphs">850</text><text x="1254" y="165" class="a" style="font-style:normal" textLength="22" lengthAdjust="spacingAndGlyphs">гПа</text>
<text x="1228" y="199" class="a" textLength="21" lengthAdjust="spacingAndGlyphs">500</text><text x="1257" y="199" class="a" style="font-style:normal">м</text>
<text x="1229" y="232" class="a" textLength="14" lengthAdjust="spacingAndGlyphs">10</text><text x="1256" y="232" class="a" style="font-style:normal">м</text>

<!-- temp legend -->
<text x="8" y="287" class="l" style="font-size:13px" textLength="79" lengthAdjust="spacingAndGlyphs">Тем-ра(°C)</text>
<text x="41" y="316" class="l" textLength="14" lengthAdjust="spacingAndGlyphs">2м</text>
<path d="M11 323.500H82" stroke="#ff4040" class="cr"/>
<text x="27" y="362" class="a" style="font-weight:bold" textLength="14" lengthAdjust="spacingAndGlyphs">Td</text><text x="54" y="362" class="l" textLength="14" lengthAdjust="spacingAndGlyphs">2м</text>
<path d="M11 369.500H78" stroke="#008000" stroke-dasharray="4 2" class="cr"/>
<text x="23" y="408" class="a" textLength="21" lengthAdjust="spacingAndGlyphs">850</text><text x="51" y="408" class="a" style="font-style:normal" textLength="20" lengthAdjust="spacingAndGlyphs">гПа</text>
<path d="M11 415.500H41M52 415.500H82" stroke="#f00090" class="cr"/>
<text x="23" y="454" class="a" textLength="21" lengthAdjust="spacingAndGlyphs">700</text><text x="51" y="454" class="a" style="font-style:normal" textLength="20" lengthAdjust="spacingAndGlyphs">гПа</text>
<path d="M11 462.500H30M38 462.500H40M48 462.500H67M75 462.500H77" stroke="#f00090" class="cr"/>
<text x="23" y="501" class="a" textLength="21" lengthAdjust="spacingAndGlyphs">500</text><text x="51" y="501" class="a" style="font-style:normal" textLength="20" lengthAdjust="spacingAndGlyphs">гПа</text>
<path d="M11 508.500H78" stroke="#f00090" stroke-dasharray="4 2" class="cr"/>

<!-- temp axis -->
<text x="110" y="257" class="an">40</text><text x="110" y="280" class="an">35</text><text x="110" y="303" class="an">30</text><text x="110" y="325" class="an">25</text><text x="110" y="348" class="an">20</text><text x="110" y="371" class="an">15</text><text x="110" y="393" class="an">10</text><text x="110" y="416" class="an">5</text><text x="110" y="438" class="an">0</text><text x="110" y="461" class="an">–5</text><text x="110" y="483" class="an">–10</text><text x="110" y="506" class="an">–15</text><text x="110" y="529" class="an">–20</text>
<text x="1228" y="257" class="a">40</text><text x="1228" y="280" class="a">35</text><text x="1228" y="303" class="a">30</text><text x="1228" y="325" class="a">25</text><text x="1228" y="348" class="a">20</text><text x="1228" y="371" class="a">15</text><text x="1228" y="393" class="a">10</text><text x="1228" y="416" class="a">5</text><text x="1228" y="438" class="a">0</text><text x="1228" y="461" class="a">–5</text><text x="1228" y="483" class="a">–10</text><text x="1228" y="506" class="a">–15</text><text x="1228" y="529" class="a">–20</text>

<!-- x axis temp -->
<g class="x">
<text x="116" y="539" class="x">0</text><text x="159" y="539" class="x">3</text><text x="201" y="539" class="x">6</text><text x="244" y="539" class="x">9</text><text x="287" y="539" class="x">12</text><text x="329" y="539" class="x">15</text><text x="372" y="539" class="x">18</text><text x="414" y="539" class="x">21</text><text x="457" y="539" class="x">0</text><text x="499" y="539" class="x">3</text><text x="542" y="539" class="x">6</text><text x="584" y="539" class="x">9</text><text x="627" y="539" class="x">12</text><text x="669" y="539" class="x">15</text><text x="712" y="539" class="x">18</text><text x="754" y="539" class="x">21</text><text x="797" y="539" class="x">0</text><text x="839" y="539" class="x">3</text><text x="882" y="539" class="x">6</text><text x="924" y="539" class="x">9</text><text x="967" y="539" class="x">12</text><text x="1009" y="539" class="x">15</text><text x="1052" y="539" class="x">18</text><text x="1094" y="539" class="x">21</text><text x="1137" y="539" class="x">0</text><text x="1179" y="539" class="x">3</text><text x="1222" y="539" class="x">6</text>
</g>
<text x="257" y="554" class="l" style="font-size:13px" textLength="93" lengthAdjust="spacingAndGlyphs">07 сентября</text>
<text x="597" y="554" class="l" style="font-size:13px" textLength="93" lengthAdjust="spacingAndGlyphs">08 сентября</text>
<text x="937" y="554" class="l" style="font-size:13px" textLength="93" lengthAdjust="spacingAndGlyphs">09 сентября</text>

<!-- pressure labels -->
<text x="22" y="622" class="l" textLength="61" lengthAdjust="spacingAndGlyphs">Давление</text>
<text x="35" y="645" class="l" textLength="35" lengthAdjust="spacingAndGlyphs">(гПа)</text>
<text x="110" y="565" class="an">1040</text><text x="110" y="583" class="an">1035</text><text x="110" y="600" class="an">1030</text><text x="110" y="617" class="an">1025</text><text x="110" y="635" class="an">1020</text><text x="110" y="653" class="an">1015</text><text x="110" y="670" class="an">1010</text><text x="110" y="688" class="an">1005</text><text x="110" y="705" class="an">1000</text><text x="110" y="723" class="an">995</text><text x="110" y="740" class="an">990</text><text x="110" y="757" class="an">985</text>
<text x="1228" y="565" class="a">1040</text><text x="1228" y="583" class="a">1035</text><text x="1228" y="600" class="a">1030</text><text x="1228" y="617" class="a">1025</text><text x="1228" y="635" class="a">1020</text><text x="1228" y="653" class="a">1015</text><text x="1228" y="670" class="a">1010</text><text x="1228" y="688" class="a">1005</text><text x="1228" y="705" class="a">1000</text><text x="1228" y="723" class="a">995</text><text x="1228" y="740" class="a">990</text><text x="1228" y="757" class="a">985</text>

<!-- precip labels -->
<text x="24" y="771" class="l" textLength="56" lengthAdjust="spacingAndGlyphs">(мм/3ч.)</text>
<text x="28" y="790" class="l" textLength="48" lengthAdjust="spacingAndGlyphs">Осадки</text>
<text x="24" y="809" class="l" textLength="56" lengthAdjust="spacingAndGlyphs">(мм/1ч.)</text>
<text x="110" y="770" class="an">5</text><text x="110" y="783" class="an">4</text><text x="110" y="796" class="an">3</text><text x="110" y="809" class="an">2</text><text x="110" y="822" class="an">1</text><text x="110" y="836" class="an">0</text>
<text x="1228" y="770" class="a">5</text><text x="1228" y="783" class="a">4</text><text x="1228" y="796" class="a">3</text><text x="1228" y="809" class="a">2</text><text x="1228" y="822" class="a">1</text><text x="1228" y="836" class="a">0</text>
<text x="170" y="779" class="p" textLength="21" lengthAdjust="spacingAndGlyphs">0.6</text><text x="212" y="779" class="p" textLength="21" lengthAdjust="spacingAndGlyphs">1.9</text><text x="255" y="779" class="p" textLength="21" lengthAdjust="spacingAndGlyphs">1.9</text><text x="297" y="779" class="p" textLength="21" lengthAdjust="spacingAndGlyphs">1.1</text><text x="509" y="779" class="p" textLength="21" lengthAdjust="spacingAndGlyphs">0.1</text><text x="552" y="779" class="p" textLength="21" lengthAdjust="spacingAndGlyphs">0.7</text><text x="595" y="779" class="p" textLength="21" lengthAdjust="spacingAndGlyphs">0.1</text><text x="850" y="779" class="p" textLength="21" lengthAdjust="spacingAndGlyphs">0.4</text><text x="893" y="779" class="p" textLength="21" lengthAdjust="spacingAndGlyphs">1.2</text><text x="935" y="779" class="p" textLength="21" lengthAdjust="spacingAndGlyphs">3.1</text><text x="978" y="779" class="p" textLength="21" lengthAdjust="spacingAndGlyphs">0.7</text><text x="1105" y="779" class="p" textLength="21" lengthAdjust="spacingAndGlyphs">1.6</text><text x="1147" y="779" class="p" textLength="21" lengthAdjust="spacingAndGlyphs">2.8</text><text x="1190" y="779" class="p" textLength="21" lengthAdjust="spacingAndGlyphs">0.2</text>

<text x="13" y="872" class="l" textLength="76" lengthAdjust="spacingAndGlyphs">Облачность</text>
<text x="13" y="939" class="l" textLength="77" lengthAdjust="spacingAndGlyphs">Конвективн.</text>
<text x="14" y="959" class="l" textLength="74" lengthAdjust="spacingAndGlyphs">облачность</text>
<text x="38" y="979" class="l" textLength="26" lengthAdjust="spacingAndGlyphs">(км)</text>

<!-- conv axis -->
<text x="110" y="911" class="an">12</text><text x="110" y="928" class="an">10</text><text x="110" y="945" class="an">8</text><text x="110" y="961" class="an">6</text><text x="110" y="978" class="an">4</text><text x="110" y="994" class="an">2</text><text x="110" y="1011" class="an">0</text>
<text x="1228" y="911" class="a">12</text><text x="1228" y="928" class="a">10</text><text x="1228" y="945" class="a">8</text><text x="1228" y="961" class="a">6</text><text x="1228" y="978" class="a">4</text><text x="1228" y="994" class="a">2</text><text x="1228" y="1011" class="a">0</text>

<text x="116" y="1020" class="x">0</text><text x="159" y="1020" class="x">3</text><text x="201" y="1020" class="x">6</text><text x="244" y="1020" class="x">9</text><text x="287" y="1020" class="x">12</text><text x="329" y="1020" class="x">15</text><text x="372" y="1020" class="x">18</text><text x="414" y="1020" class="x">21</text><text x="457" y="1020" class="x">0</text><text x="499" y="1020" class="x">3</text><text x="542" y="1020" class="x">6</text><text x="584" y="1020" class="x">9</text><text x="627" y="1020" class="x">12</text><text x="669" y="1020" class="x">15</text><text x="712" y="1020" class="x">18</text><text x="754" y="1020" class="x">21</text><text x="797" y="1020" class="x">0</text><text x="839" y="1020" class="x">3</text><text x="882" y="1020" class="x">6</text><text x="924" y="1020" class="x">9</text><text x="967" y="1020" class="x">12</text><text x="1009" y="1020" class="x">15</text><text x="1052" y="1020" class="x">18</text><text x="1094" y="1020" class="x">21</text><text x="1137" y="1020" class="x">0</text><text x="1179" y="1020" class="x">3</text><text x="1222" y="1020" class="x">6</text>
</svg>
</body></html>
